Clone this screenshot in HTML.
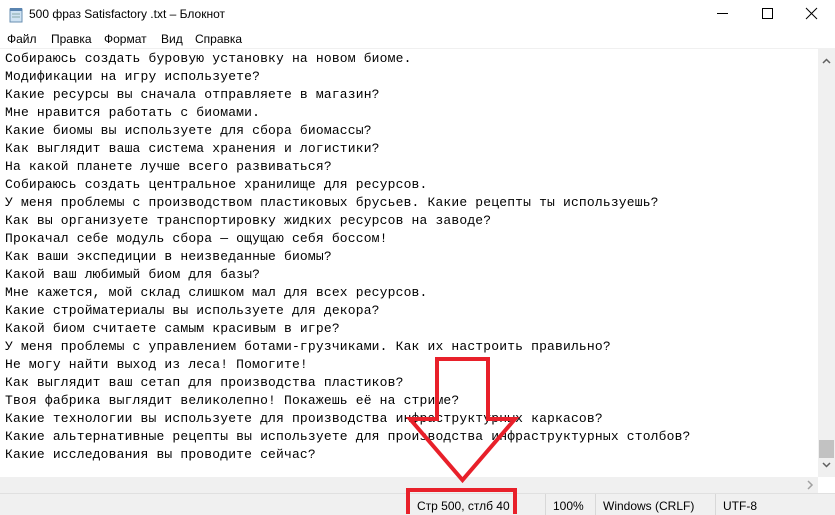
<!DOCTYPE html>
<html><head><meta charset="utf-8"><style>
body{margin:0;width:835px;height:514px;overflow:hidden;background:#fff;font-family:"Liberation Sans","Noto Sans CJK SC",sans-serif;position:relative}
.t{position:absolute;left:0;top:0;width:835px;height:30px;background:#fff}
.t span{position:absolute;left:29px;top:7px;font-size:12px;color:#000}
.m{position:absolute;top:30px;left:0;width:835px;height:18px;font-size:12px;border-bottom:1px solid #f0f0f0}
.m span{position:absolute;top:2px}
pre{position:absolute;left:5px;top:50px;margin:0;font-family:"Liberation Mono",monospace;font-size:13px;letter-spacing:0.17px;line-height:18px;color:#000}
.vs{position:absolute;left:818px;top:48px;width:17px;height:429px;background:#f0f0f0}
.hs{position:absolute;left:0;top:477px;width:818px;height:16px;background:#f0f0f0}
.st{position:absolute;left:0;top:493px;width:835px;height:21px;background:#f0f0f0;border-top:1px solid #e0e0e0;font-size:12px}
.st span{position:absolute;top:5px}
.sep{position:absolute;top:0;width:1px;height:21px;background:#d8d8d8}
</style></head><body>
<div class="t"><svg style="position:absolute;left:8px;top:7px" width="16" height="16"><rect x="2" y="2" width="12" height="13" fill="#cfe3f3" stroke="#6a8fb0"/><rect x="2" y="1" width="12" height="3" fill="#5a84b0"/><line x1="4" y1="7" x2="12" y2="7" stroke="#8aa"/><line x1="4" y1="10" x2="12" y2="10" stroke="#8aa"/></svg><span>500 фраз Satisfactory .txt – Блокнот</span>
<svg style="position:absolute;left:715px;top:7px" width="120" height="16" fill="none" stroke="#000"><line x1="2" y1="6.5" x2="13" y2="6.5"/><rect x="47.5" y="1.5" width="10" height="10"/><path d="M91 1L102 12M102 1L91 12"/></svg></div>
<div class="m"><span style="left:7px">Файл</span><span style="left:51px">Правка</span><span style="left:104px">Формат</span><span style="left:161px">Вид</span><span style="left:195px">Справка</span></div>
<pre>Собираюсь создать буровую установку на новом биоме.
Модификации на игру используете?
Какие ресурсы вы сначала отправляете в магазин?
Мне нравится работать с биомами.
Какие биомы вы используете для сбора биомассы?
Как выглядит ваша система хранения и логистики?
На какой планете лучше всего развиваться?
Собираюсь создать центральное хранилище для ресурсов.
У меня проблемы с производством пластиковых брусьев. Какие рецепты ты используешь?
Как вы организуете транспортировку жидких ресурсов на заводе?
Прокачал себе модуль сбора — ощущаю себя боссом!
Как ваши экспедиции в неизведанные биомы?
Какой ваш любимый биом для базы?
Мне кажется, мой склад слишком мал для всех ресурсов.
Какие стройматериалы вы используете для декора?
Какой биом считаете самым красивым в игре?
У меня проблемы с управлением ботами-грузчиками. Как их настроить правильно?
Не могу найти выход из леса! Помогите!
Как выглядит ваш сетап для производства пластиков?
Твоя фабрика выглядит великолепно! Покажешь её на стриме?
Какие технологии вы используете для производства инфраструктурных каркасов?
Какие альтернативные рецепты вы используете для производства инфраструктурных столбов?
Какие исследования вы проводите сейчас?</pre>
<div class="vs"><svg width="17" height="429"><path d="M5 15L8.5 11.5L12 15" stroke="#606060" stroke-width="1.5" fill="none"/><rect x="1" y="392" width="15" height="18" fill="#c2c2c2"/><path d="M5 415L8.5 418.5L12 415" stroke="#606060" stroke-width="1.5" fill="none"/></svg></div>
<div class="hs"><svg width="818" height="16"><path d="M808 4L812 8L808 12" stroke="#a0a0a0" stroke-width="1.5" fill="none"/></svg></div>
<div class="st"><div class="sep" style="left:545px"></div><div class="sep" style="left:595px"></div><div class="sep" style="left:715px"></div>
<span style="left:417px">Стр 500, стлб 40</span><span style="left:553px">100%</span><span style="left:603px">Windows (CRLF)</span><span style="left:723px">UTF-8</span></div>
<svg style="position:absolute;left:0;top:0" width="835" height="514" fill="none" stroke="#e8202a" stroke-width="4"><path d="M437 359H488V419H515L462.5 480L410 419H437Z"/><rect x="408" y="490" width="107" height="30"/></svg>
</body></html>
